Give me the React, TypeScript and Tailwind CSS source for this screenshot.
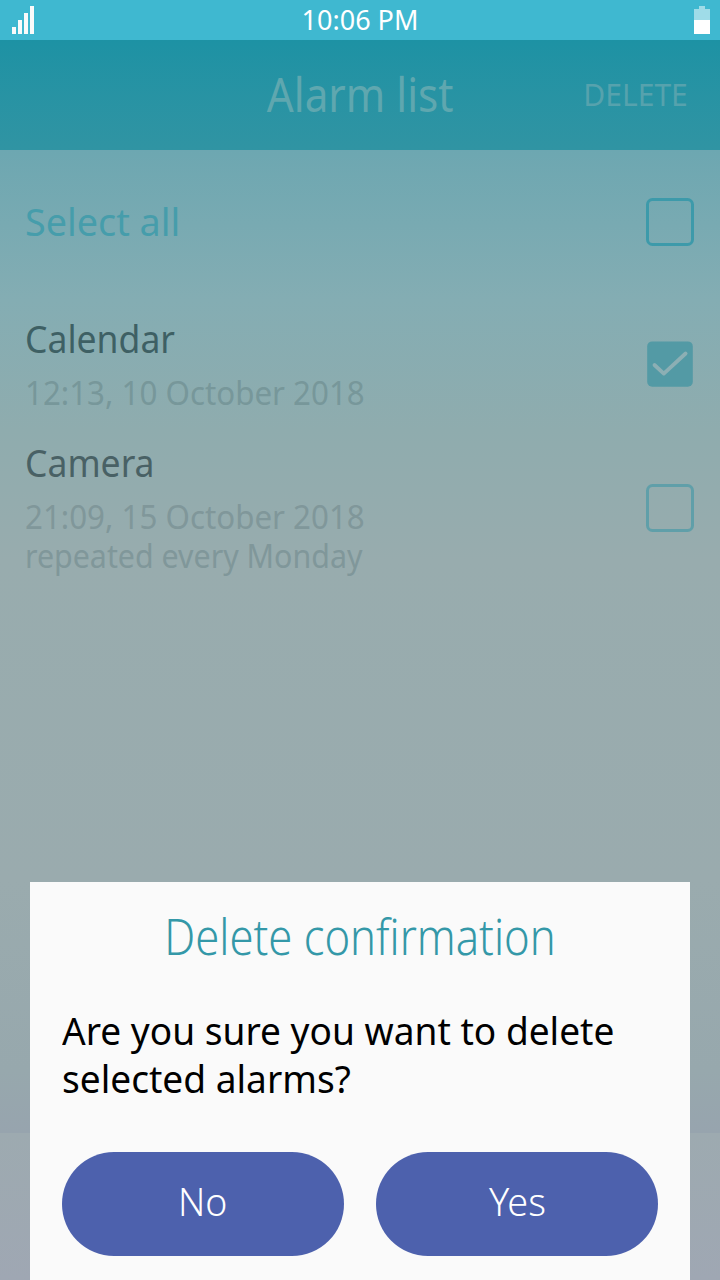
import { useState } from "react";

type CheckboxProps = { checked: boolean; color: string; onToggle: () => void };

function Checkbox({ checked, color, onToggle }: CheckboxProps) {
  return (
    <button type="button" role="checkbox" aria-checked={checked} onClick={onToggle} className={color}>
      <svg width="48" height="48" viewBox="0 0 48 48" fill="none" className="block">
        {checked ? (
          <>
            <rect x="1.2" y="1.4" width="45.6" height="45.4" rx="5" fill="currentColor" />
            <path d="M8.5 25 L17.8 33.6 L39.6 13.5" stroke="#8cafb4" strokeWidth="3.8" strokeLinecap="round" strokeLinejoin="round" />
          </>
        ) : (
          <rect x="1.5" y="1.5" width="45" height="45" rx="5" stroke="currentColor" strokeWidth="3" />
        )}
      </svg>
    </button>
  );
}

function StatusBar() {
  return (
    <div className="grid h-10 grid-cols-3 items-center bg-[#3fb8d0] text-white">
      <svg width="22" height="28" className="ml-3" fill="#fafafa">
        <rect x="0" y="21" width="4" height="7" />
        <rect x="6" y="14" width="4" height="14" />
        <rect x="12" y="7" width="4" height="21" />
        <rect x="18" y="0" width="4" height="28" />
      </svg>
      <span className="text-center text-[27px] leading-10 whitespace-nowrap">10:06 PM</span>
      <svg width="16" height="28" className="mr-2.5 justify-self-end">
        <path d="M0 3h5V0h6v3h5v11H0z" fill="#9fdce8" />
        <rect y="14" width="16" height="14" fill="#fff" />
      </svg>
    </div>
  );
}

export default function App() {
  const [all, setAll] = useState(false);
  const [calendar, setCalendar] = useState(true);
  const [camera, setCamera] = useState(false);

  return (
    <div className="flex h-[1280px] w-[720px] flex-col overflow-hidden bg-[linear-gradient(to_bottom,#6da7b1_150px,#84adb3_300px,#8facae_430px,#98acae_560px,#9aabae_880px,#97a8ad_1070px,#97a4ae_1133px,#9daab0_1133px,#9fa7b3_1280px)] font-['Noto_Sans','Open_Sans',sans-serif]">
      <StatusBar />
      <header className="grid h-[110px] grid-cols-[1fr_auto_1fr] items-center bg-linear-to-b from-[#1d92a4] to-[#3094a3] pb-0.5">
        <h1 className="col-start-2 scale-x-[0.88] text-[48px] leading-[60px] text-[#5fa7af] whitespace-nowrap">Alarm list</h1>
        <button type="button" className="mr-8 origin-right scale-x-[0.97] justify-self-end text-[31px] text-[#56a2ad]">DELETE</button>
      </header>
      <main className="flex grow flex-col pr-[26px] pl-[25px]">
        <div className="flex h-36 items-center justify-between">
          <span className="origin-left scale-x-[0.993] pb-0.5 text-[38px] text-[#469dab]">Select all</span>
          <Checkbox checked={all} color="text-[#3d9aaa]" onToggle={() => setAll(!all)} />
        </div>
        <div className="flex h-[140px] items-center justify-between">
          <div className="self-start pt-[15px]">
            <div className="origin-left scale-x-[0.935] text-[38px] leading-[59px] text-[#3e6064]">Calendar</div>
            <div className="mt-[5px] origin-left scale-x-[0.978] text-[32px] leading-[39px] text-[#77979a]">12:13, 10 October 2018</div>
          </div>
          <Checkbox checked={calendar} color="text-[#539aa5]" onToggle={() => setCalendar(!calendar)} />
        </div>
        <div className="flex h-[148px] items-center justify-between">
          <div className="-mt-px self-start">
            <div className="origin-left scale-x-[0.935] text-[38px] leading-[59px] text-[#496165]">Camera</div>
            <div className="mt-[5px] origin-left scale-x-[0.978] text-[32px] leading-[39px] text-[#80979a]">21:09, 15 October 2018</div>
            <div className="origin-left scale-x-[0.949] text-[32px] leading-[39px] text-[#80979a]">repeated every Monday</div>
          </div>
          <Checkbox checked={camera} color="text-[#609fa9]" onToggle={() => setCamera(!camera)} />
        </div>
      </main>
      <section role="dialog" className="mx-[30px] flex h-[398px] flex-col bg-[#fafafa] px-8 pt-[21px]">
        <h2 className="scale-x-[0.889] text-center text-[49px] leading-[66px] font-light text-[#3498a8] whitespace-nowrap">Delete confirmation</h2>
        <p className="mt-[37px] origin-left scale-x-[0.951] text-[39px] leading-12 text-black whitespace-nowrap">
          Are you sure you want to delete
          <br />
          selected alarms?
        </p>
        <div className="mt-auto mb-6 grid grid-cols-2 gap-8 text-[39px] font-light text-white">
          <button type="button" className="h-[104px] rounded-full bg-[#4d61ad] pb-1.5">
            <span className="inline-block scale-x-[0.96]">No</span>
          </button>
          <button type="button" className="h-[104px] rounded-full bg-[#4d61ad] pb-1.5">
            <span className="inline-block scale-x-[0.97]">Yes</span>
          </button>
        </div>
      </section>
    </div>
  );
}
